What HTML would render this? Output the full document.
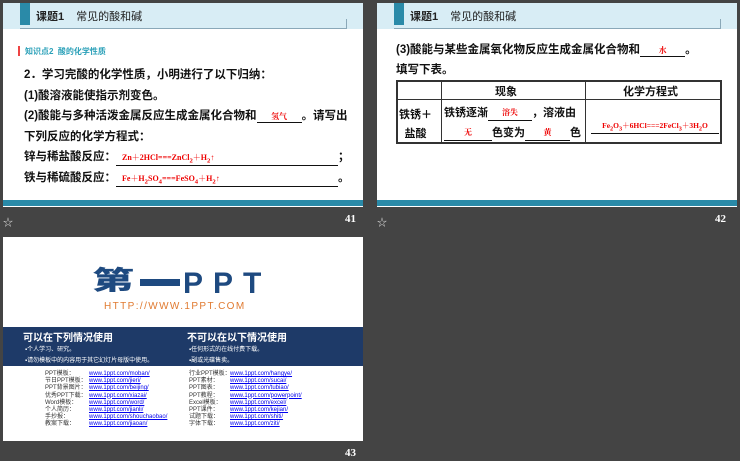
<!DOCTYPE html>
<html><head><meta charset="utf-8"><style>
*{margin:0;padding:0;box-sizing:border-box}
body{width:740px;height:461px;background:#444;position:relative;overflow:hidden;font-family:"Liberation Sans","Noto Sans CJK SC",sans-serif}
.a{position:absolute;white-space:nowrap}
.slide{position:absolute;background:#fff;width:360px;height:204px;overflow:hidden}
.hd{position:absolute;left:0;top:0;width:360px;height:26px;background:#d8edf5}
.sq{position:absolute;left:17px;top:0;width:10px;height:22px;background:#2a8aa8}
.hl{position:absolute;left:17px;top:25px;width:327px;height:1px;background:#8aa8b8}
.hr{position:absolute;left:343px;top:16px;width:1px;height:10px;background:#8aa8b8}
.ht{position:absolute;left:33px;top:5px;font-size:11px;color:#222;font-weight:bold}
.ht span{font-weight:normal;margin-left:12px}
.bb{position:absolute;left:0;top:197px;width:360px;height:6px;background:#2a8aa8}
.t{font-size:11.5px;font-weight:bold;color:#111}
.r{color:#e00;font-size:8px;font-weight:bold;font-family:"Liberation Serif","Noto Serif CJK SC",serif}
.u{border-bottom:1px solid #111;display:inline-block;text-align:center}
.num{position:absolute;color:#fff;font-size:11px;font-weight:bold;font-family:"Liberation Serif",serif}
.lk{font-size:6px;color:#333;line-height:7.2px}
.lk b{font-weight:normal;color:#00e;text-decoration:underline}
</style></head><body>

<div class="slide" style="left:3px;top:3px">
<div class="hd"></div><div class="sq"></div><div class="hl"></div><div class="hr"></div>
<div class="ht">课题1<span>常见的酸和碱</span></div>
<div class="a" style="left:15px;top:43px;width:2px;height:10px;background:#e44"></div>
<div class="a" style="left:22px;top:43px;font-size:8px;color:#2aa0b8;font-weight:bold">知识点2&nbsp;&nbsp;酸的化学性质</div>
<div class="a t" style="left:21px;top:63px">2．学习完酸的化学性质，小明进行了以下归纳：</div>
<div class="a t" style="left:21px;top:84px">(1)酸溶液能使指示剂变色。</div>
<div class="a t" style="left:21px;top:104px">(2)酸能与多种活泼金属反应生成金属化合物和<span class="u r" style="width:45px">氢气</span>。请写出</div>
<div class="a t" style="left:21px;top:125px">下列反应的化学方程式：</div>
<div class="a t" style="left:21px;top:145px">锌与稀盐酸反应：<span class="u r" style="width:222px;text-align:left;padding-left:6px">Zn＋2HCl===ZnCl<sub>2</sub>＋H<sub>2</sub>↑</span>；</div>
<div class="a t" style="left:21px;top:166px">铁与稀硫酸反应：<span class="u r" style="width:222px;text-align:left;padding-left:6px">Fe＋H<sub>2</sub>SO<sub>4</sub>===FeSO<sub>4</sub>＋H<sub>2</sub>↑</span>。</div>
<div class="bb"></div>
</div>

<div class="slide" style="left:377px;top:3px">
<div class="hd"></div><div class="sq"></div><div class="hl"></div><div class="hr"></div>
<div class="ht">课题1<span>常见的酸和碱</span></div>
<div class="a t" style="left:19px;top:38px">(3)酸能与某些金属氧化物反应生成金属化合物和<span class="u r" style="width:45px">水</span>。</div>
<div class="a t" style="left:19px;top:58px">填写下表。</div>
<div class="a" style="left:19px;top:77px;width:326px;height:64px;border:2px solid #333"></div>
<div class="a" style="left:19px;top:96px;width:326px;height:1px;background:#333"></div>
<div class="a" style="left:64px;top:77px;width:1px;height:64px;background:#333"></div>
<div class="a" style="left:208px;top:77px;width:1px;height:64px;background:#333"></div>
<div class="a t" style="left:118px;top:80px;font-size:11px">现象</div>
<div class="a t" style="left:246px;top:80px;font-size:11px">化学方程式</div>
<div class="a t" style="left:22px;top:103px;font-size:11px;line-height:19px;text-align:center">铁锈＋<br>盐酸</div>
<div class="a t" style="left:67px;top:100px;font-size:11px;line-height:20px">铁锈逐渐<span class="u r" style="width:44px;line-height:14px;vertical-align:middle">溶失</span>，溶液由</div>
<div class="a t" style="left:67px;top:120px;font-size:11px;line-height:20px"><span class="u r" style="width:48px;line-height:14px;vertical-align:middle">无</span>色变为<span class="u r" style="width:45px;line-height:14px;vertical-align:middle">黄</span>色</div>
<div class="a" style="left:214px;top:112px"><span class="u r" style="width:128px;font-size:7.5px">Fe<sub>2</sub>O<sub>3</sub>＋6HCl===2FeCl<sub>3</sub>＋3H<sub>2</sub>O</span></div>
<div class="bb"></div>
</div>

<div class="a" style="left:3px;top:214px;color:#ddd;font-size:10px">☆</div>
<div class="num" style="left:345px;top:213px">41</div>
<div class="a" style="left:377px;top:214px;color:#ddd;font-size:10px">☆</div>
<div class="num" style="left:715px;top:213px">42</div>

<div class="slide" style="left:3px;top:237px">
<div class="a" style="left:89px;top:29px;font-size:42px;line-height:42px;font-weight:900;color:#1e4a80;font-family:'Noto Sans CJK SC',sans-serif;transform:scaleY(0.62);transform-origin:0 0">第</div>
<div class="a" style="left:137px;top:42px;width:40px;height:7px;background:#1e4a80"></div>
<div class="a" style="left:180px;top:33px;font-size:30px;line-height:28px;font-weight:bold;color:#1e4a80;letter-spacing:10px">PPT</div>
<div class="a" style="left:101px;top:64px;font-size:10px;color:#e07a30;letter-spacing:1.4px">HTTP://WWW.1PPT.COM</div>
<div class="a" style="left:0;top:90px;width:360px;height:39px;background:#1e3a68"></div>
<div class="a" style="left:20px;top:92px;font-size:10px;color:#fff;font-weight:bold">可以在下列情况使用</div>
<div class="a" style="left:22px;top:107px;font-size:6px;color:#fff">▪个人学习、研究。</div>
<div class="a" style="left:22px;top:118px;font-size:6px;color:#fff">▪请勿模板中的内容用于其它幻灯片母版中使用。</div>
<div class="a" style="left:184px;top:92px;font-size:10px;color:#fff;font-weight:bold">不可以在以下情况使用</div>
<div class="a" style="left:186px;top:107px;font-size:6px;color:#fff">▪任何形式的在线付费下载。</div>
<div class="a" style="left:186px;top:118px;font-size:6px;color:#fff">▪副或光碟售卖。</div>
<div class="a lk" style="left:42px;top:134px">PPT模板：<br>节日PPT模板：<br>PPT背景图片：<br>优秀PPT下载：<br>Word模板：<br>个人简历：<br>手抄报：<br>教案下载：</div>
<div class="a lk" style="left:86px;top:134px"><b>www.1ppt.com/moban/</b><br><b>www.1ppt.com/jieri/</b><br><b>www.1ppt.com/beijing/</b><br><b>www.1ppt.com/xiazai/</b><br><b>www.1ppt.com/word/</b><br><b>www.1ppt.com/jianli/</b><br><b>www.1ppt.com/shouchaobao/</b><br><b>www.1ppt.com/jiaoan/</b></div>
<div class="a lk" style="left:186px;top:134px">行业PPT模板：<br>PPT素材：<br>PPT图表：<br>PPT教程：<br>Excel模板：<br>PPT课件：<br>试题下载：<br>字体下载：</div>
<div class="a lk" style="left:227px;top:134px"><b>www.1ppt.com/hangye/</b><br><b>www.1ppt.com/sucai/</b><br><b>www.1ppt.com/tubiao/</b><br><b>www.1ppt.com/powerpoint/</b><br><b>www.1ppt.com/excel/</b><br><b>www.1ppt.com/kejian/</b><br><b>www.1ppt.com/shiti/</b><br><b>www.1ppt.com/ziti/</b></div>
</div>
<div class="num" style="left:345px;top:447px">43</div>
</body></html>
